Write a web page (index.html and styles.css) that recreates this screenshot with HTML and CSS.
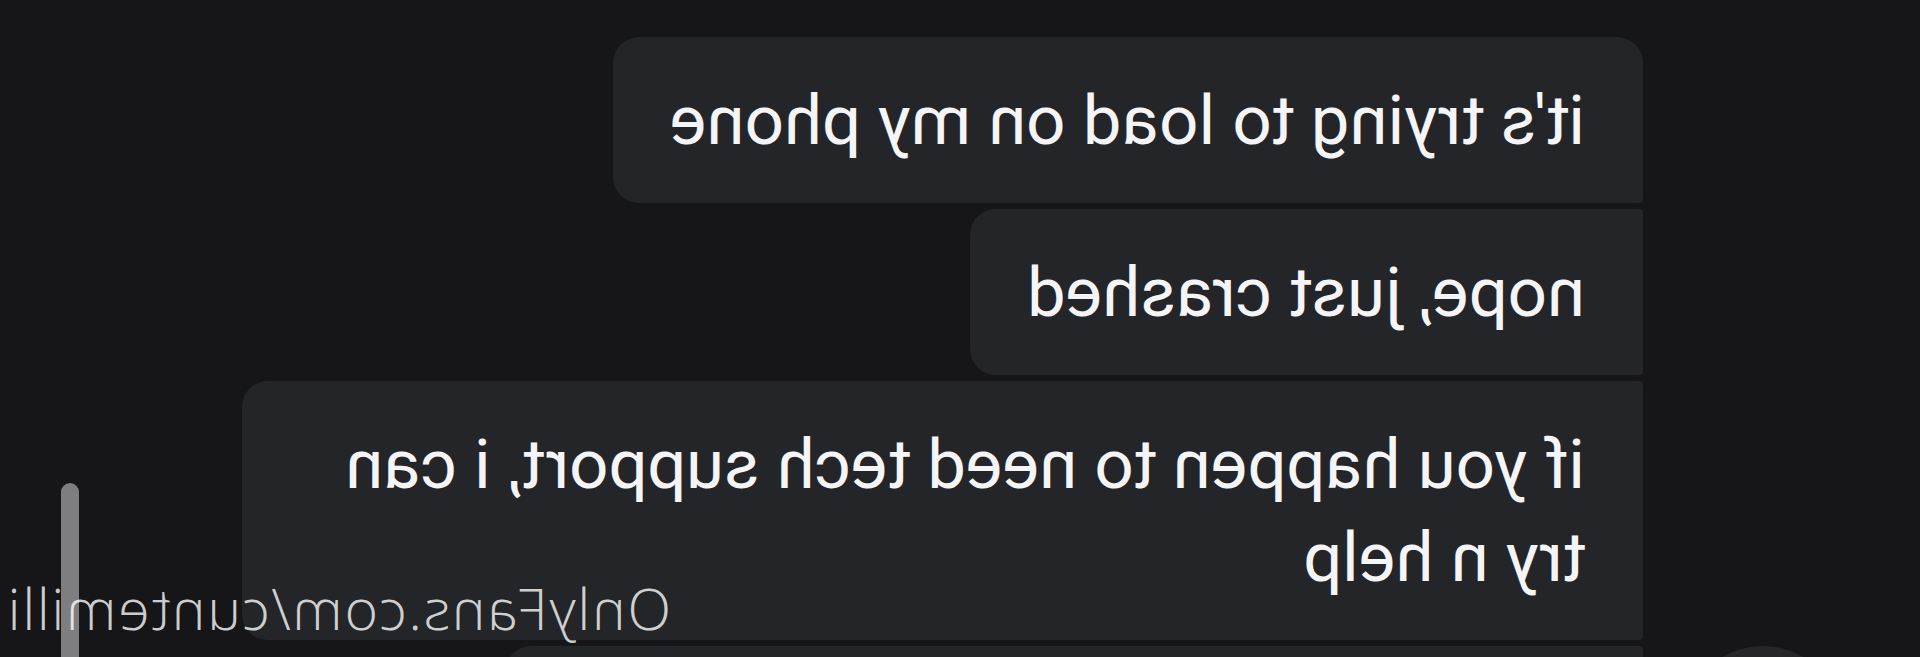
FILE: index.html
```html
<!DOCTYPE html>
<html>
<head>
    <title>Chat</title>
    <link rel="stylesheet" href="styles.css">
</head>
<body>
    <!-- whole capture is mirrored -->
    <div class="screen">
        <div class="thread">
            <div class="row">
                <div class="avatar-slot"></div>
                <div class="bubble first">it's trying to load on my phone</div>
            </div>
            <div class="row">
                <div class="avatar-slot"></div>
                <div class="bubble">nope, just crashed</div>
            </div>
            <div class="row">
                <div class="avatar-slot"></div>
                <div class="bubble">if you happen to need tech support, i can try n help</div>
            </div>
            <div class="row">
                <div class="avatar-slot">
                    <div class="avatar"></div>
                </div>
                <div class="bubble cut"></div>
            </div>
        </div>

        <div class="scroll-thumb"></div>
        <div class="watermark">OnlyFans.com/cuntemilli</div>
    </div>
</body>
</html>
```

FILE: styles.css
```css
:root {
    --background: #161619;
    --bubble: #242529;
    --text: #f5f5f7;
    --avatar: #26262a;
    --thumb: #7e7e80;
}

* {
    margin: 0;
    padding: 0;
    box-sizing: border-box;
}

body {
    background-color: var(--background);
    overflow: hidden;
}

.screen {
    position: relative;
    width: 1920px;
    height: 657px;
    overflow: hidden;
    background-color: var(--background);
    transform: scaleX(-1);
}

/* Message list */
.thread {
    display: flex;
    flex-direction: column;
    gap: 6px;
    padding-top: 37px;
}

.row {
    display: flex;
    align-items: flex-start;
}

.avatar-slot {
    width: 277px;
    flex-shrink: 0;
}

.avatar {
    width: 160px;
    height: 160px;
    margin-left: 77px;
    border-radius: 50%;
    background-color: var(--avatar);
}

.bubble {
    max-width: 1401px;
    padding: 37px 57px 36px 58px;
    background-color: var(--bubble);
    color: var(--text);
    font-family: Roboto, "Liberation Sans", sans-serif;
    font-size: 69px;
    line-height: 93px;
    border-radius: 4px 26px 26px 4px;
}

.bubble.first {
    border-top-left-radius: 26px;
}

.bubble.cut {
    width: 1138px;
    height: 120px;
}

/* Overlays */
.scroll-thumb {
    position: absolute;
    top: 483px;
    right: 61px;
    width: 18px;
    height: 200px;
    border-radius: 9px 9px 0 0;
    background-color: var(--thumb);
}

.watermark {
    position: absolute;
    top: 580px;
    right: 6px;
    font-family: "Open Sans", "DejaVu Sans", sans-serif;
    font-weight: 300;
    font-size: 57px;
    line-height: 57px;
    letter-spacing: 1.7px;
    color: rgba(255, 255, 255, 0.8);
    white-space: nowrap;
}
```
